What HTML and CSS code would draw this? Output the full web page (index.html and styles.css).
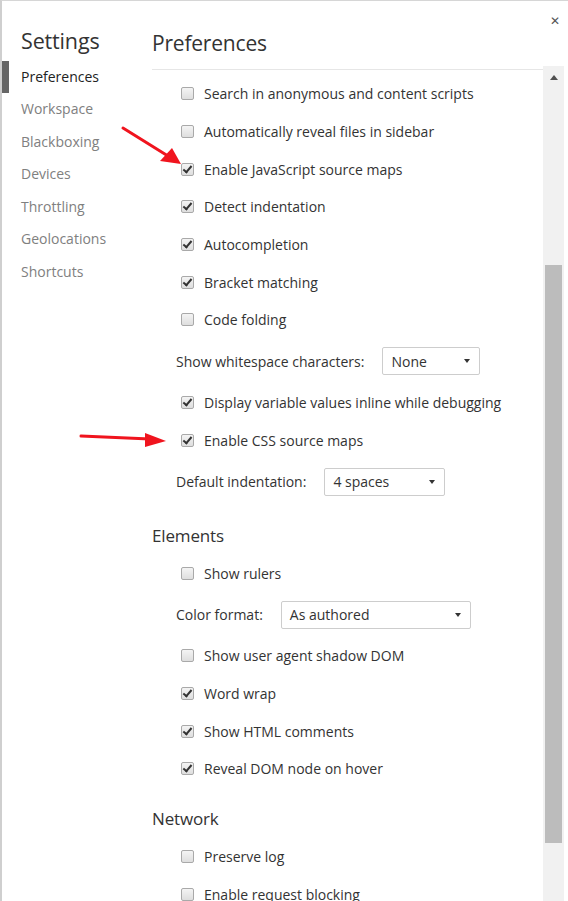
FILE: index.html
```html
<!DOCTYPE html>
<html>
<head>
<meta charset="utf-8">
<link rel="stylesheet" href="styles.css">
</head>
<body>
<div class="frame">
  <nav class="sidebar">
    <div class="side-title">Settings</div>
    <ul class="tabs">
      <li class="tab selected">Preferences</li>
      <li class="tab">Workspace</li>
      <li class="tab">Blackboxing</li>
      <li class="tab">Devices</li>
      <li class="tab">Throttling</li>
      <li class="tab">Geolocations</li>
      <li class="tab">Shortcuts</li>
    </ul>
  </nav>
  <main class="main">
    <div class="content">
      <h1 class="page-title">Preferences</h1>
      <div class="scroller">
        <div class="list">
          <label class="row"><span class="cb"></span>Search in anonymous and content scripts</label>
          <label class="row"><span class="cb"></span>Automatically reveal files in sidebar</label>
          <label class="row"><span class="cb checked"></span>Enable JavaScript source maps</label>
          <label class="row"><span class="cb checked"></span>Detect indentation</label>
          <label class="row"><span class="cb checked"></span>Autocompletion</label>
          <label class="row"><span class="cb checked"></span>Bracket matching</label>
          <label class="row"><span class="cb"></span>Code folding</label>
          <div class="row select-row"><span class="sel-label">Show whitespace characters:</span><span class="select w-ws">None<i class="caret"></i></span></div>
          <label class="row"><span class="cb checked"></span>Display variable values inline while debugging</label>
          <label class="row"><span class="cb checked"></span>Enable CSS source maps</label>
          <div class="row select-row"><span class="sel-label">Default indentation:</span><span class="select w-ind">4 spaces<i class="caret"></i></span></div>

          <h2 class="section">Elements</h2>
          <label class="row"><span class="cb"></span>Show rulers</label>
          <div class="row select-row"><span class="sel-label">Color format:</span><span class="select w-color">As authored<i class="caret"></i></span></div>
          <label class="row"><span class="cb"></span>Show user agent shadow DOM</label>
          <label class="row"><span class="cb checked"></span>Word wrap</label>
          <label class="row"><span class="cb checked"></span>Show HTML comments</label>
          <label class="row"><span class="cb checked"></span>Reveal DOM node on hover</label>

          <h2 class="section">Network</h2>
          <label class="row"><span class="cb"></span>Preserve log</label>
          <label class="row"><span class="cb"></span>Enable request blocking</label>
        </div>
      </div>
    </div>
    <div class="scrollbar">
      <div class="sb-up"></div>
      <div class="sb-space"></div>
      <div class="sb-thumb"></div>
    </div>
  </main>
  <button class="close" aria-label="Close">&#x2715;</button>
  <svg class="annot" width="568" height="901" viewBox="0 0 568 901">
    <line x1="123" y1="128" x2="168" y2="156" stroke="#f0141e" stroke-width="3" stroke-linecap="round"/>
    <polygon points="181,164 160,161 172,148" fill="#f0141e"/>
    <line x1="81" y1="436" x2="150" y2="439" stroke="#f0141e" stroke-width="3" stroke-linecap="round"/>
    <polygon points="166,441 145,433 145,447" fill="#f0141e"/>
  </svg>
</div>
</body>
</html>
```
FILE: styles.css
```css
* { box-sizing: border-box; }
html, body { margin: 0; padding: 0; background: #fff; }
body {
  font-family: "Open Sans", "Noto Sans", sans-serif;
  color: #333;
  width: 568px;
  height: 901px;
  overflow: hidden;
}
.frame {
  position: relative;
  display: flex;
  width: 568px;
  height: 901px;
  border-top: 1px solid #d6d6d6;
  border-left: 2px solid #cfcfcf;
}
.sidebar {
  width: 150px;
  flex: none;
}
.side-title {
  font-size: 21.5px;
  color: #333;
  padding-left: 19px;
  height: 59.6px;
  line-height: 22px;
  padding-top: 29px;
  letter-spacing: -0.15px;
}
.tabs { list-style: none; margin: 0; padding: 0; }
.tab {
  height: 32.5px;
  line-height: 32.5px;
  padding-left: 19px;
  font-size: 14px;
  color: #808080;
}
.tab.selected {
  color: #222;
  border-left: 7px solid #666;
  padding-left: 12px;
}
.main {
  display: flex;
  flex: none;
  width: 414px;
}
.content {
  width: 391px;
  flex: none;
  display: flex;
  flex-direction: column;
}
.page-title {
  margin: 0;
  font-weight: normal;
  font-size: 21px;
  color: #333;
  height: 68px;
  padding-top: 30px;
  line-height: 24px;
  letter-spacing: -0.2px;
}
.scroller {
  flex: 1;
  overflow: hidden;
  border-top: 1px solid #e6e6e6;
}
.list { padding-top: 5px; }
.row {
  display: flex;
  align-items: center;
  height: 37.7px;
  padding-left: 29px;
  font-size: 14px;
  color: #333;
  white-space: nowrap;
}
.cb {
  width: 13px;
  height: 13px;
  flex: none;
  margin-right: 10px;
  border: 1px solid #a9a9a9;
  border-radius: 2px;
  background: linear-gradient(#f4f4f4, #dedede);
  position: relative;
}
.cb.checked::after {
  content: "";
  position: absolute;
  left: 3px;
  top: 0px;
  width: 3px;
  height: 7px;
  border-right: 2px solid #333;
  border-bottom: 2px solid #333;
  transform: rotate(40deg);
}
.select-row {
  height: 45px;
  padding-left: 24px;
}
.sel-label { margin-right: 18px; }
.select {
  position: relative;
  display: flex;
  align-items: center;
  height: 28px;
  padding-left: 8px;
  border: 1px solid #cdcdcd;
  border-radius: 2px;
  background: #fff;
  color: #333;
}
.w-ws { width: 98px; }
.w-ind { width: 121px; }
.w-color { width: 190px; }
.caret {
  position: absolute;
  right: 9px;
  top: 11px;
  width: 0;
  height: 0;
  border-left: 3.5px solid transparent;
  border-right: 3.5px solid transparent;
  border-top: 4px solid #333;
}
.section {
  margin: 19.6px 0 6.6px 0;
  height: 24px;
  line-height: 24px;
  font-weight: normal;
  font-size: 17px;
  color: #333;
  letter-spacing: -0.15px;
}
.scrollbar {
  width: 21px;
  flex: none;
  margin-top: 65px;
  background: #f1f1f1;
  display: flex;
  flex-direction: column;
  align-items: center;
}
.sb-up {
  width: 0;
  height: 0;
  margin-top: 9px;
  border-left: 4.5px solid transparent;
  border-right: 4.5px solid transparent;
  border-bottom: 5px solid #505050;
}
.sb-space { height: 185px; flex: none; }
.sb-thumb {
  width: 17px;
  height: 578px;
  background: #bcbcbc;
}
.close {
  position: absolute;
  top: 13px;
  right: 8px;
  border: 0;
  background: none;
  padding: 0;
  font-size: 12px;
  font-weight: bold;
  color: #555;
  font-family: "DejaVu Sans", sans-serif;
}
.annot {
  position: absolute;
  left: -2px;
  top: -1px;
  pointer-events: none;
}
```
